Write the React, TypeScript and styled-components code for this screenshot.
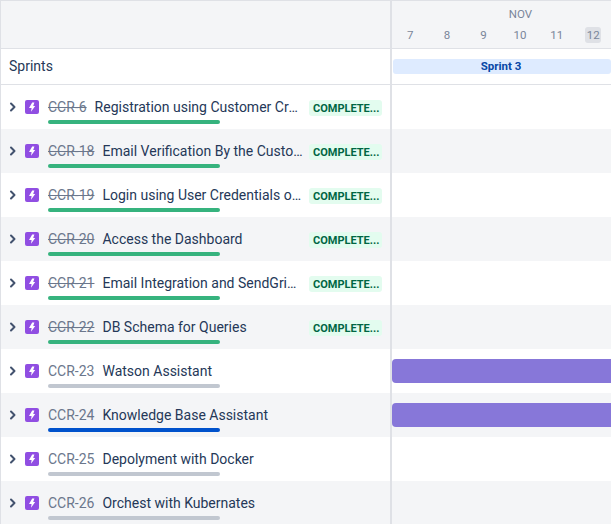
import React from "react";
import styled, { createGlobalStyle } from "styled-components";

const Global = createGlobalStyle`
  html, body { margin: 0; padding: 0; background: #fff; overflow: hidden; }
  body { font-family: Roboto, "Noto Sans", sans-serif; color: #253858; }
`;

const Page = styled.div`
  width: 611px;
  height: 524px;
  overflow: hidden;
  display: grid;
  grid-template-columns: 391px 219px;
  grid-template-rows: 49px 36px repeat(10, 44px);
  border-left: 1px solid #dfe1e6;
  box-sizing: border-box;
`;

const Cell = styled.div<{ $tone?: "head" | "alt" | "plain"; $side?: "left" | "right" }>`
  box-sizing: border-box;
  min-width: 0;
  background: ${(p) => (p.$tone === "head" || p.$tone === "alt" ? "#f4f5f7" : "#fff")};
  border-right: ${(p) => (p.$side === "left" ? "2px solid #dfe1e6" : "0")};
`;

const HeadCell = styled(Cell)`
  border-top: 1px solid #dfe1e6;
  border-bottom: 1px solid #dfe1e6;
`;

const Timeline = styled(HeadCell)`
  padding-top: 5px;
  color: #7a869a;
  font-size: 11.5px;
`;

const Month = styled.div`
  height: 16px;
  line-height: 16px;
  text-align: center;
  width: 257px;
`;

const Days = styled.div`
  display: flex;
  margin-top: 5px;
`;

const Day = styled.span<{ $today?: boolean }>`
  flex: 0 0 36.6px;
  display: flex;
  justify-content: center;
  height: 16px;
  line-height: 16px;

  & > span {
    display: block;
    min-width: 16px;
    text-align: center;
    border-radius: 3px;
    background: ${(p) => (p.$today ? "#dfe1e6" : "transparent")};
  }
`;

const SprintLabelCell = styled(Cell)`
  border-bottom: 1px solid #dfe1e6;
  display: flex;
  align-items: center;
  padding: 0 0 2px 8px;
  font-size: 14px;
  color: #253858;
`;

const SprintTrack = styled(Cell)`
  border-bottom: 1px solid #dfe1e6;
  padding: 10px 0 0 1px;
`;

const SprintBar = styled.div`
  height: 15px;
  line-height: 15px;
  border-radius: 3px;
  background: #deebff;
  color: #0747a6;
  font-size: 11.5px;
  font-weight: 700;
  text-align: center;
  padding-right: 2px;
`;

const IssueRow = styled(Cell)`
  display: flex;
  align-items: flex-start;
  padding: 13px 8px 0 8px;
`;

const Chevron = styled.svg`
  flex: none;
  width: 8px;
  height: 10px;
  margin: 4px 8px 0 0;
`;

const TypeIcon = styled.svg`
  flex: none;
  width: 14px;
  height: 14px;
  margin: 2px 9px 0 0;
`;

const Body = styled.div`
  flex: 1;
  min-width: 0;
`;

const TextLine = styled.div`
  display: flex;
  align-items: center;
  height: 19px;
  font-size: 14px;
  line-height: 19px;
`;

const Key = styled.span<{ $done?: boolean }>`
  flex: none;
  color: #6b778c;
  text-decoration: ${(p) => (p.$done ? "line-through" : "none")};
`;

const Summary = styled.span`
  flex: 1;
  min-width: 0;
  margin-left: 8px;
  overflow: hidden;
  white-space: nowrap;
  text-overflow: ellipsis;
`;

const Badge = styled.span`
  flex: none;
  width: 73px;
  height: 16px;
  line-height: 17px;
  margin-left: 6px;
  padding: 0 0 0 4px;
  box-sizing: border-box;
  border-radius: 3px;
  background: #e3fcef;
  color: #006644;
  font-size: 11px;
  font-weight: 700;
  white-space: nowrap;
`;

const Progress = styled.div<{ $color: string }>`
  width: 172px;
  height: 4px;
  margin-top: 3px;
  border-radius: 2px;
  background: ${(p) => p.$color};
`;

const Track = styled(Cell)`
  padding: 10px 0 0 0;
`;

const Bar = styled.div`
  height: 24px;
  border-radius: 4px 0 0 4px;
  background: #8777d9;
`;

type Issue = { key: string; summary: string; done?: boolean; color: string; bar?: boolean };

const GREEN = "#36b37e";
const GREY = "#c1c7d0";
const BLUE = "#0052cc";

const issues: Issue[] = [
  { key: "CCR-6", summary: "Registration using Customer Credentials", done: true, color: GREEN },
  { key: "CCR-18", summary: "Email Verification By the Customer Account", done: true, color: GREEN },
  { key: "CCR-19", summary: "Login using User Credentials on the Portal", done: true, color: GREEN },
  { key: "CCR-20", summary: "Access the Dashboard", done: true, color: GREEN },
  { key: "CCR-21", summary: "Email Integration and SendGrid Setup Flow", done: true, color: GREEN },
  { key: "CCR-22", summary: "DB Schema for Queries", done: true, color: GREEN },
  { key: "CCR-23", summary: "Watson Assistant", color: GREY, bar: true },
  { key: "CCR-24", summary: "Knowledge Base Assistant", color: BLUE, bar: true },
  { key: "CCR-25", summary: "Depolyment with Docker", color: GREY },
  { key: "CCR-26", summary: "Orchest with Kubernates", color: GREY },
];

const days = [7, 8, 9, 10, 11, 12];

export default function App() {
  return (
    <>
      <Global />
      <Page>
        <HeadCell $tone="head" $side="left" />
        <Timeline $tone="head">
          <Month>NOV</Month>
          <Days>
            {days.map((d) => (
              <Day key={d} $today={d === 12}>
                <span>{d}</span>
              </Day>
            ))}
          </Days>
        </Timeline>
        <SprintLabelCell $side="left">Sprints</SprintLabelCell>
        <SprintTrack>
          <SprintBar>Sprint 3</SprintBar>
        </SprintTrack>
        {issues.map((it, i) => {
          const tone = i % 2 === 1 ? "alt" : "plain";
          return (
            <React.Fragment key={it.key}>
              <IssueRow $tone={tone} $side="left">
                <Chevron viewBox="0 0 8 10">
                  <path d="M2 1.5 L5.5 5 L2 8.5" fill="none" stroke="#42526e" strokeWidth="2" strokeLinecap="round" strokeLinejoin="round" />
                </Chevron>
                <TypeIcon viewBox="0 0 14 14">
                  <rect width="14" height="14" rx="2" fill="#904ee2" />
                  <path d="M7.2 2.6 H9.4 L8.2 6 H10.2 L6 11.8 L6.6 8 H4 Z" fill="#fff" />
                </TypeIcon>
                <Body>
                  <TextLine>
                    <Key $done={it.done}>{it.key}</Key>
                    <Summary>{it.summary}</Summary>
                    {it.done && <Badge>COMPLETE...</Badge>}
                  </TextLine>
                  <Progress $color={it.color} />
                </Body>
              </IssueRow>
              <Track $tone={tone}>{it.bar && <Bar />}</Track>
            </React.Fragment>
          );
        })}
      </Page>
    </>
  );
}
